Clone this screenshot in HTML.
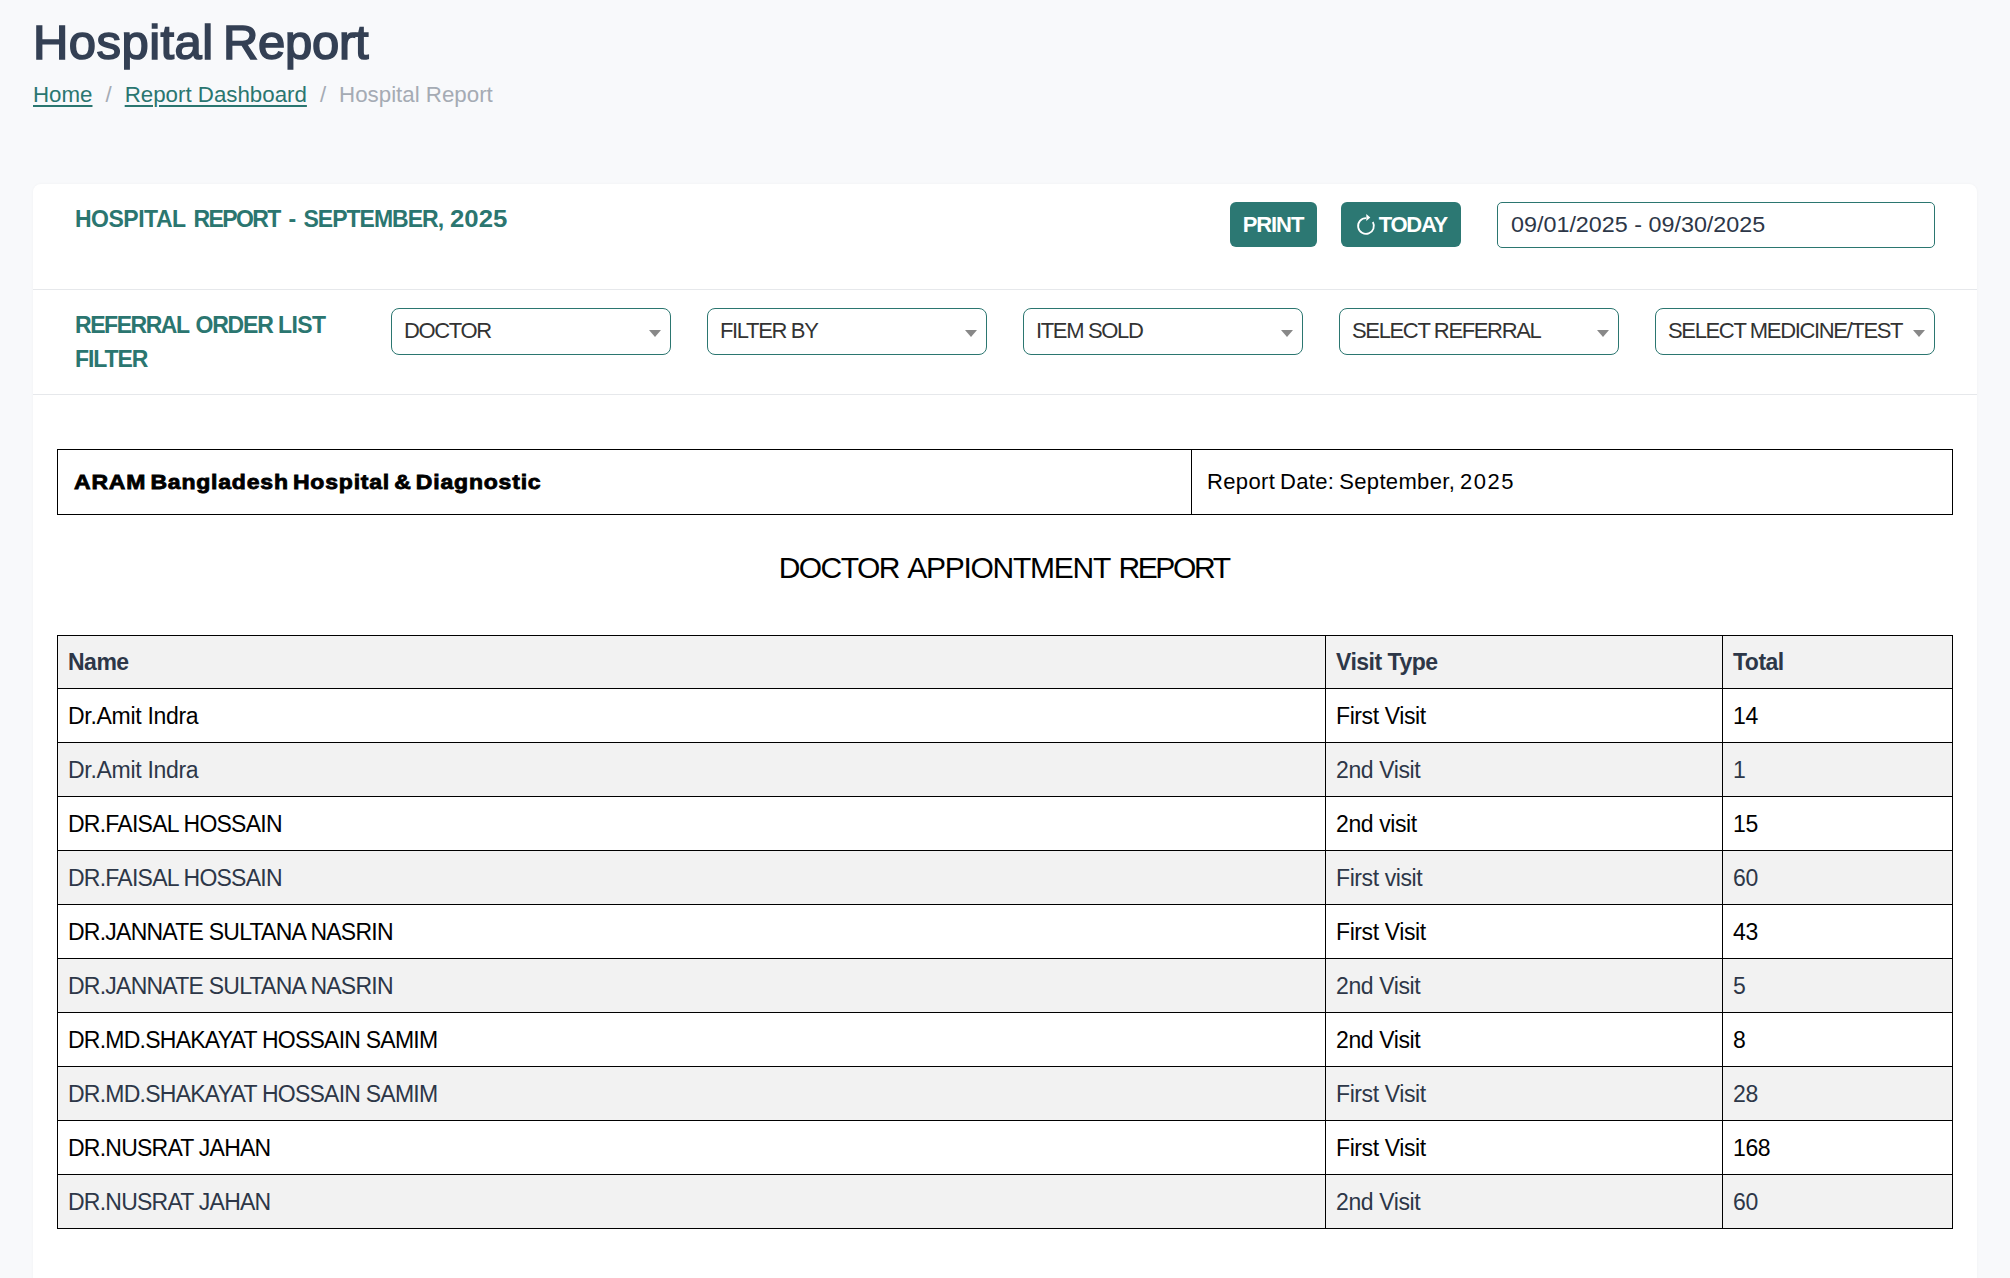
<!DOCTYPE html>
<html><head><meta charset="utf-8">
<style>
*{margin:0;padding:0;box-sizing:border-box}
html,body{width:2010px;height:1278px;overflow:hidden}
body{background:#f8f9fb;font-family:"Liberation Sans",sans-serif;position:relative;color:#000}
.abs{position:absolute;white-space:nowrap}
#title{left:33px;top:14px;font-size:49px;line-height:56px;font-weight:normal;color:#344054;letter-spacing:-0.3px;-webkit-text-stroke:1.6px #344054}
#bc{left:33px;top:82px;font-size:22.3px;line-height:26px}
#bc a{color:#2a7670;text-decoration:underline;text-underline-offset:3px;text-decoration-thickness:2px}
#bc .sep{color:#a5abb4;padding:0 13px}
#bc .cur{color:#a5abb4}
#card{position:absolute;left:33px;top:184px;width:1944px;height:1200px;background:#fff;border-radius:8px;box-shadow:0 0 3px rgba(0,0,0,0.04)}
.hline{position:absolute;left:33px;width:1944px;height:1px;background:#e6e8eb}
.teal{color:#2b7670}
#h1{left:75px;top:205px;font-size:23px;line-height:28px;font-weight:bold;letter-spacing:-0.4px}
.btn{position:absolute;top:202px;height:45px;background:#2c7873;border-radius:6px;color:#fff;font-weight:bold;font-size:22px;line-height:45px;text-align:center;white-space:nowrap}
#date{position:absolute;left:1497px;top:202px;width:438px;height:46px;border:1px solid #2b7670;border-radius:5px;font-size:21.5px;line-height:44px;padding-left:13px;color:#2d3748;letter-spacing:0px;white-space:nowrap}
#flabel{left:75px;top:308px;font-size:23px;line-height:34px;font-weight:bold;letter-spacing:-1.1px}
.sel{position:absolute;top:308px;width:280px;height:47px;border:1px solid #2b7670;border-radius:8px;font-size:22px;line-height:43px;padding-left:12px;color:#333;letter-spacing:-1.35px;white-space:nowrap}
.sel i{position:absolute;right:9px;top:21px;width:0;height:0;border-left:6px solid transparent;border-right:6px solid transparent;border-top:7px solid #888}
#rbox{position:absolute;left:57px;top:449px;width:1896px;height:66px;border:1px solid #000}
#rdiv{position:absolute;left:1191px;top:449px;width:1px;height:66px;background:#000}
#aram{left:74px;top:467px;font-size:23px;line-height:28px;font-weight:bold;color:#000;letter-spacing:0.8px;word-spacing:-3px;-webkit-text-stroke:0.9px #000;transform:scaleY(0.9);transform-origin:0 21.6px}
#rdate{left:1207px;top:469px;font-size:22px;line-height:26px;color:#000;letter-spacing:0.35px;word-spacing:-1.6px}
#rtitle{left:0;width:2010px;text-align:center;top:550px;font-size:30px;line-height:36px;color:#000;letter-spacing:-1.55px;word-spacing:1.5px;text-indent:-2.5px}
table{position:absolute;left:57px;top:635px;width:1896px;border-collapse:collapse}
td,th{border:1px solid #000;height:54px;padding:2px 0 0 10px;font-size:23px;text-align:left;vertical-align:middle;white-space:nowrap}
th{background:#f2f2f2;color:#2d3748;font-weight:bold;height:53px;letter-spacing:-0.5px;padding-top:0}
td{letter-spacing:-0.76px}
td+td{letter-spacing:-0.4px}
td.m{letter-spacing:-0.3px}
tr.g td{background:#f2f2f2;color:#2d3748}
tr.w td{background:#fff;color:#000}
</style></head><body>
<div id="title" class="abs"><span style="letter-spacing:0.45px">Hospital</span><span style="letter-spacing:-0.3px;margin-left:-4px"> Report</span></div>
<div id="bc" class="abs"><a>Home</a><span class="sep">/</span><a>Report Dashboard</a><span class="sep">/</span><span class="cur">Hospital Report</span></div>
<div id="card"></div>
<div class="hline" style="top:289px"></div>
<div class="hline" style="top:394px"></div>
<div id="h1" class="abs teal" style="left:0;width:600px"><span style="position:absolute;left:75px;letter-spacing:-0.5px">HOSPITAL</span><span style="position:absolute;left:193.5px;letter-spacing:-1.6px">REPORT</span><span style="position:absolute;left:288.5px">-</span><span style="position:absolute;left:303.5px;letter-spacing:-1.0px">SEPTEMBER,</span><span style="position:absolute;left:449.5px;letter-spacing:0px;transform:scaleX(1.12);transform-origin:0 0">2025</span></div>
<div class="btn" style="left:1230px;width:87px;letter-spacing:-1.1px;text-indent:-1px">PRINT</div>
<div class="btn" style="left:1341px;width:120px"><svg style="position:absolute;left:15px;top:10px" width="22" height="26" viewBox="0 0 22 26"><path d="M10 6.1 A7.9 7.9 0 1 0 16.84 10.05" fill="none" stroke="#fff" stroke-width="1.8"/><path d="M10.3 2 L14.3 5.5 L10.3 9 Z" fill="#fff"/></svg><span style="position:absolute;left:37.7px;letter-spacing:-1.25px">TODAY</span></div>
<div id="date"><span style="display:inline-block;transform:scaleX(1.085);transform-origin:0 0">09/01/2025 - 09/30/2025</span></div>
<div id="flabel" class="abs teal" style="left:0;width:380px"><span style="position:absolute;left:75px;top:0;letter-spacing:-1.45px">REFERRAL</span><span style="position:absolute;left:195.5px;top:0;letter-spacing:-1.2px">ORDER</span><span style="position:absolute;left:278px;top:0;letter-spacing:-0.6px">LIST</span><span style="position:absolute;left:75px;top:34px;letter-spacing:-1.1px">FILTER</span></div>
<div class="sel" style="left:391px">DOCTOR<i></i></div>
<div class="sel" style="left:707px">FILTER BY<i></i></div>
<div class="sel" style="left:1023px">ITEM SOLD<i></i></div>
<div class="sel" style="left:1339px">SELECT REFERRAL<i></i></div>
<div class="sel" style="left:1655px">SELECT MEDICINE/TEST<i></i></div>
<div id="rbox"></div><div id="rdiv"></div>
<div id="aram" class="abs">ARAM Bangladesh Hospital &amp; Diagnostic</div>
<div id="rdate" class="abs">Report Date: September, <span style="letter-spacing:1.5px">2025</span></div>
<div id="rtitle" class="abs">DOCTOR <span style="letter-spacing:-1.25px">APPIONTMENT</span> <span style="letter-spacing:-2.35px">REPORT</span></div>
<table>
<colgroup><col style="width:1268px"><col style="width:397px"><col></colgroup>
<tr><th>Name</th><th>Visit Type</th><th>Total</th></tr>
<tr class="w"><td class="m">Dr.Amit Indra</td><td>First Visit</td><td>14</td></tr>
<tr class="g"><td class="m">Dr.Amit Indra</td><td>2nd Visit</td><td>1</td></tr>
<tr class="w"><td>DR.FAISAL HOSSAIN</td><td>2nd visit</td><td>15</td></tr>
<tr class="g"><td>DR.FAISAL HOSSAIN</td><td>First visit</td><td>60</td></tr>
<tr class="w"><td>DR.JANNATE SULTANA NASRIN</td><td>First Visit</td><td>43</td></tr>
<tr class="g"><td>DR.JANNATE SULTANA NASRIN</td><td>2nd Visit</td><td>5</td></tr>
<tr class="w"><td>DR.MD.SHAKAYAT HOSSAIN SAMIM</td><td>2nd Visit</td><td>8</td></tr>
<tr class="g"><td>DR.MD.SHAKAYAT HOSSAIN SAMIM</td><td>First Visit</td><td>28</td></tr>
<tr class="w"><td>DR.NUSRAT JAHAN</td><td>First Visit</td><td>168</td></tr>
<tr class="g"><td>DR.NUSRAT JAHAN</td><td>2nd Visit</td><td>60</td></tr>
</table>
</body></html>
